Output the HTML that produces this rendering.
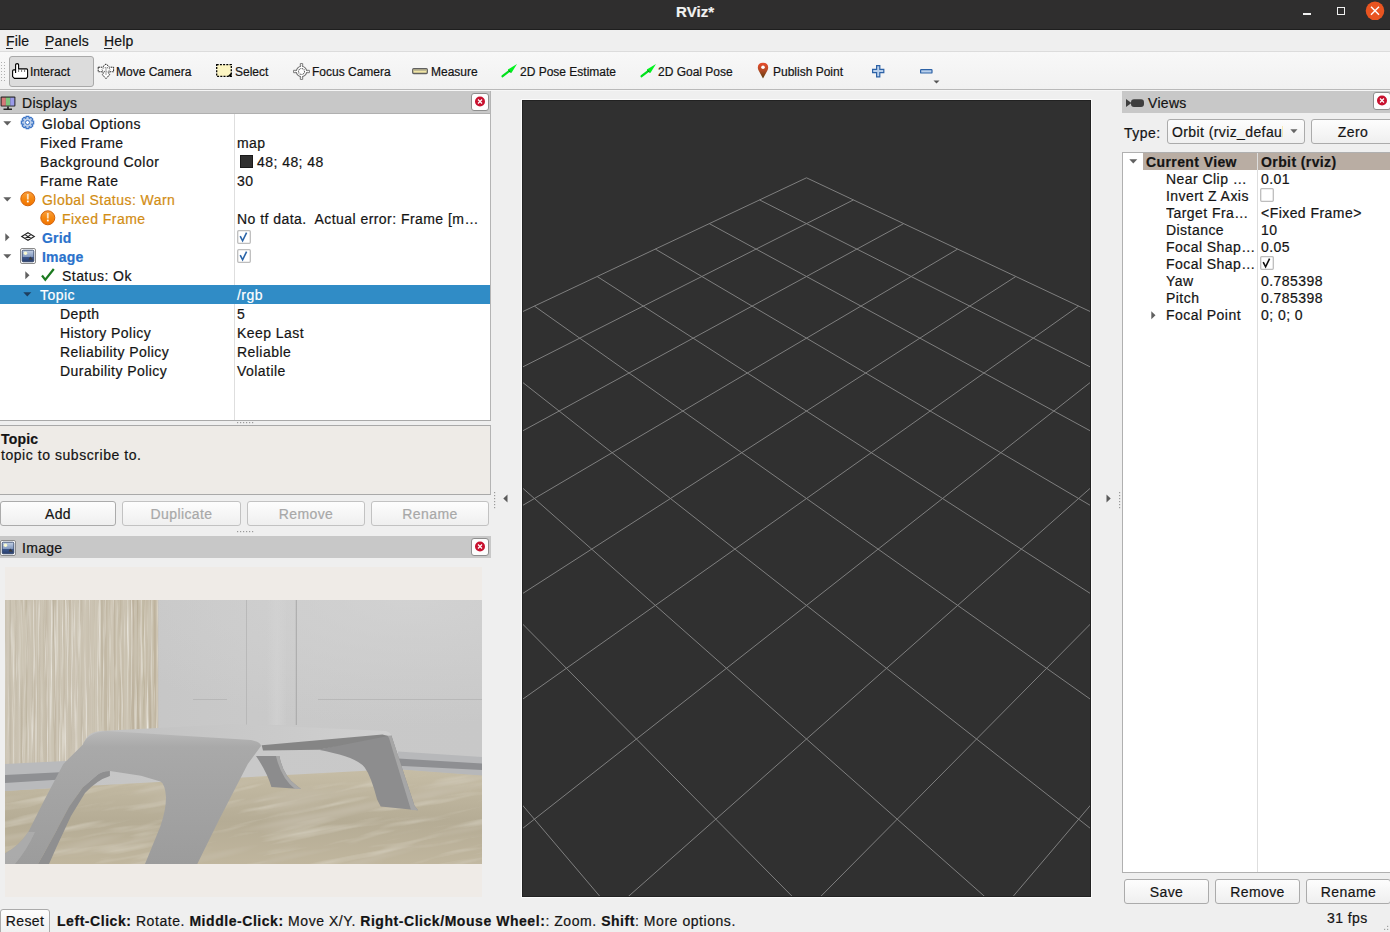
<!DOCTYPE html>
<html><head><meta charset="utf-8"><title>RViz</title>
<style>
*{margin:0;padding:0;box-sizing:border-box}
html,body{width:1390px;height:932px;overflow:hidden;background:#efefef;font-family:"Liberation Sans",sans-serif;font-size:14px;color:#141414;position:relative}
.a{position:absolute;white-space:nowrap;-webkit-text-stroke:0.2px currentColor}
svg.a{overflow:visible}
</style></head><body>
<div class="a" style="left:0px;top:0px;width:1390px;height:29px;background:#2f2e2e"></div>
<div class="a" style="left:0px;top:29px;width:1390px;height:1px;background:#1e1e1e"></div>
<div class="a" style="left:676px;top:1.80px;font-size:15px;line-height:20px;font-weight:700;color:#f2f2f2;letter-spacing:0.1px;">RViz*</div>
<div class="a" style="left:1303px;top:13px;width:8px;height:2px;background:#f0f0f0"></div>
<div class="a" style="left:1337px;top:7px;width:8px;height:8px;border:1.5px solid #f0f0f0"></div>
<svg class="a" style="left:1364px;top:0px" width="24" height="24"><circle cx="11" cy="10.8" r="9.3" fill="#e95420"/><path d="M7 6.8L15 14.8M15 6.8L7 14.8" stroke="#fff" stroke-width="1.4"/></svg>
<div class="a" style="left:0px;top:30px;width:1390px;height:21px;background:#efefef"></div>
<div class="a" style="left:0px;top:51px;width:1390px;height:1px;background:#dcdcdc"></div>
<div class="a" style="left:6px;top:31.15px;font-size:14px;line-height:20px;letter-spacing:0.2px;">File</div>
<div class="a" style="left:45px;top:31.15px;font-size:14px;line-height:20px;letter-spacing:0.2px;">Panels</div>
<div class="a" style="left:104px;top:31.15px;font-size:14px;line-height:20px;letter-spacing:0.2px;">Help</div>
<div class="a" style="left:6px;top:48px;width:7px;height:1px;background:#222"></div>
<div class="a" style="left:45px;top:48px;width:8px;height:1px;background:#222"></div>
<div class="a" style="left:104px;top:48px;width:8px;height:1px;background:#222"></div>
<div class="a" style="left:0px;top:52px;width:1390px;height:37px;background:linear-gradient(#f8f8f8,#f1f1f1)"></div>
<div class="a" style="left:0px;top:89px;width:1390px;height:1px;background:#b9b9b9"></div>
<div class="a" style="left:0px;top:90px;width:1390px;height:1px;background:#f6f6f6"></div>
<svg class="a" style="left:0;top:60px" width="6" height="22"><rect x="1" y="2" width="1" height="1" fill="#b0b0b0"/><rect x="1" y="5" width="1" height="1" fill="#b0b0b0"/><rect x="1" y="8" width="1" height="1" fill="#b0b0b0"/><rect x="1" y="11" width="1" height="1" fill="#b0b0b0"/><rect x="1" y="14" width="1" height="1" fill="#b0b0b0"/><rect x="1" y="17" width="1" height="1" fill="#b0b0b0"/><rect x="1" y="20" width="1" height="1" fill="#b0b0b0"/><rect x="4" y="2" width="1" height="1" fill="#b0b0b0"/><rect x="4" y="5" width="1" height="1" fill="#b0b0b0"/><rect x="4" y="8" width="1" height="1" fill="#b0b0b0"/><rect x="4" y="11" width="1" height="1" fill="#b0b0b0"/><rect x="4" y="14" width="1" height="1" fill="#b0b0b0"/><rect x="4" y="17" width="1" height="1" fill="#b0b0b0"/><rect x="4" y="20" width="1" height="1" fill="#b0b0b0"/></svg>
<div class="a" style="left:9px;top:56px;width:85px;height:31px;background:#dcdcdc;border:1px solid #a9a9a9;border-radius:3px"></div>
<div class="a" style="left:30px;top:61.84px;font-size:12px;line-height:20px;">Interact</div>
<div class="a" style="left:116px;top:61.84px;font-size:12px;line-height:20px;">Move Camera</div>
<div class="a" style="left:235px;top:61.84px;font-size:12px;line-height:20px;">Select</div>
<div class="a" style="left:312px;top:61.84px;font-size:12px;line-height:20px;">Focus Camera</div>
<div class="a" style="left:431px;top:61.84px;font-size:12px;line-height:20px;">Measure</div>
<div class="a" style="left:520px;top:61.84px;font-size:12px;line-height:20px;">2D Pose Estimate</div>
<div class="a" style="left:658px;top:61.84px;font-size:12px;line-height:20px;">2D Goal Pose</div>
<div class="a" style="left:773px;top:61.84px;font-size:12px;line-height:20px;">Publish Point</div>
<svg class="a" style="left:12px;top:63px;" width="17" height="17" viewBox="0 0 17 17"><path d="M3.6 10 V1.9 Q3.6 0.6 5.1 0.6 Q6.6 0.6 6.6 1.9 V5.9 H14.6 Q15.6 5.9 15.6 6.9 V13.8 L14.3 15.4 H2.4 L0.6 13.6 V8 Q0.6 6.9 1.7 6.9 H3.6" fill="#fff" stroke="#000" stroke-width="1.1"/><path d="M6.6 6 V9 M9.6 6 V9 M12.6 6 V9" stroke="#666" stroke-width="0.9"/></svg>
<svg class="a" style="left:97px;top:63px;" width="18" height="17" viewBox="0 0 18 17"><path d="M1.2 4.2 L5.4 4.2 L9 0.9 L12.6 4.2 L16.6 4.2 L16.6 8.8 Q12.5 8.4 11.2 9.6 L12.6 11.8 L9 15.6 L5.4 11.8 L6.8 9.6 Q5.5 8.4 1.2 8.8 Z" fill="#fff" stroke="#222" stroke-width="1" stroke-dasharray="1.8 0.7"/><ellipse cx="9" cy="6.6" rx="4" ry="2" fill="none" stroke="#333" stroke-width="0.9" stroke-dasharray="1 0.9"/><path d="M9 4.5 V12" stroke="#b8b8b8" stroke-width="1.4"/></svg>
<svg class="a" style="left:216px;top:64px;" width="16" height="13" viewBox="0 0 16 13"><rect x="0.7" y="0.7" width="14.6" height="11.6" fill="#fcf5c2" stroke="#000" stroke-width="1.3" stroke-dasharray="2 1.2"/><path d="M15.5 8.5 V12.6 H11.4 Z" fill="#000"/></svg>
<svg class="a" style="left:293px;top:63px;" width="17" height="17" viewBox="0 0 17 17"><circle cx="8.5" cy="8.5" r="5.2" fill="#fff" stroke="#777" stroke-width="1.1"/><path d="M7.3 0.6 H9.7 V3.3 H7.3Z M7.3 13.7 H9.7 V16.4 H7.3Z M0.6 7.3 V9.7 H3.3 V7.3Z M13.7 7.3 V9.7 H16.4 V7.3Z" fill="#fff" stroke="#777" stroke-width="1"/><path d="M8.5 3 V14 M3 8.5 H14" stroke="#fff" stroke-width="1"/><circle cx="8.5" cy="8.5" r="3" fill="none" stroke="#555" stroke-width="1.1" stroke-dasharray="1 0.8"/></svg>
<svg class="a" style="left:412px;top:68px;" width="16" height="6" viewBox="0 0 16 6"><rect x="0.7" y="0.7" width="14.6" height="4.8" rx="1" fill="#f1e6a6" stroke="#606060" stroke-width="1.3"/><path d="M3 1 V3 M5 1 V3 M7 1 V3 M9 1 V3 M11 1 V3 M13 1 V3" stroke="#777" stroke-width="0.8"/></svg>
<svg class="a" style="left:501px;top:63px;" width="17" height="15" viewBox="0 0 17 15"><path d="M1.6 13.2 L8.5 7.8" stroke="#00e21c" stroke-width="2.3" stroke-linecap="round"/><path d="M6.8 6.6 L16 1 L10.4 9.9 Z" fill="#00f41e"/><path d="M7.4 7.2 L9.7 9.4" stroke="#0a6a12" stroke-width="1"/></svg>
<svg class="a" style="left:640px;top:63px;" width="17" height="15" viewBox="0 0 17 15"><path d="M1.6 13.2 L8.5 7.8" stroke="#00e21c" stroke-width="2.3" stroke-linecap="round"/><path d="M6.8 6.6 L16 1 L10.4 9.9 Z" fill="#00f41e"/><path d="M7.4 7.2 L9.7 9.4" stroke="#0a6a12" stroke-width="1"/></svg>
<svg class="a" style="left:757px;top:62px;" width="12" height="17" viewBox="0 0 12 17"><defs><linearGradient id="pg" x1="0" y1="0" x2="0" y2="1"><stop offset="0" stop-color="#ea4c2c"/><stop offset="0.5" stop-color="#b14a25"/><stop offset="1" stop-color="#5a3a0a"/></linearGradient></defs><path d="M6 16.5 L1.6 8.6 Q0.8 7.2 0.8 5.6 Q0.8 0.7 6 0.7 Q11.2 0.7 11.2 5.6 Q11.2 7.2 10.4 8.6 Z" fill="url(#pg)"/><circle cx="6" cy="5.2" r="1.8" fill="#fff"/></svg>
<svg class="a" style="left:872px;top:65px;" width="13" height="13" viewBox="0 0 13 13"><path d="M4.6 0.6 H7.8 V4.4 H11.8 V7.6 H7.8 V11.8 H4.6 V7.6 H0.6 V4.4 H4.6 Z" fill="#b9d0ec" stroke="#2d62a6" stroke-width="1.2"/></svg>
<svg class="a" style="left:920px;top:69px;" width="13" height="5" viewBox="0 0 13 5"><rect x="0.6" y="0.6" width="11.4" height="3.4" rx="0.6" fill="#b9d0ec" stroke="#2d62a6" stroke-width="1.2"/></svg>
<svg class="a" style="left:933px;top:80px;" width="8" height="4" viewBox="0 0 8 4"><path d="M0.5 0.5 H6.5 L3.5 3.5 Z" fill="#555"/></svg>
<div class="a" style="left:0px;top:91px;width:491px;height:22px;background:#c8c8c8"></div>
<div class="a" style="left:0px;top:113px;width:491px;height:1px;background:#b0b0b0"></div>
<svg class="a" style="left:0px;top:96px;" width="16" height="15" viewBox="0 0 16 15"><rect x="0.6" y="0.6" width="14.8" height="10" rx="1" fill="#222"/><rect x="1.6" y="1.6" width="4.3" height="8" fill="#d47a7a"/><rect x="5.9" y="1.6" width="4.3" height="8" fill="#7cc57c"/><rect x="10.2" y="1.6" width="4.2" height="8" fill="#9a9ae8"/><path d="M8 10.6 V12.5 M3.5 13.3 H12" stroke="#222" stroke-width="1.6"/></svg>
<div class="a" style="left:22px;top:93.15px;font-size:14px;line-height:20px;letter-spacing:0.3px;">Displays</div>
<svg class="a" style="left:471px;top:93px;" width="18" height="18" viewBox="0 0 18 18"><rect x="0.5" y="0.5" width="17" height="17" rx="2.5" fill="#fdfdfd" stroke="#8e8e8e"/><circle cx="9" cy="8.5" r="5" fill="#c8102e"/><path d="M7 6.5 L11 10.5 M11 6.5 L7 10.5" stroke="#fff" stroke-width="1.2"/></svg>
<div class="a" style="left:0px;top:114px;width:490px;height:306px;background:#fff"></div>
<div class="a" style="left:490px;top:91px;width:1px;height:330px;background:#b4b4b4"></div>
<div class="a" style="left:0px;top:420px;width:491px;height:1px;background:#a9a9a9"></div>
<div class="a" style="left:234px;top:114px;width:1px;height:306px;background:#dedede"></div>
<div class="a" style="left:0px;top:285px;width:490px;height:19px;background:#308cc6"></div>
<div class="a" style="left:42px;top:113.75px;font-size:14px;line-height:20px;letter-spacing:0.45px;">Global Options</div>
<div class="a" style="left:40px;top:132.75px;font-size:14px;line-height:20px;letter-spacing:0.45px;">Fixed Frame</div>
<div class="a" style="left:40px;top:151.75px;font-size:14px;line-height:20px;letter-spacing:0.45px;">Background Color</div>
<div class="a" style="left:40px;top:170.75px;font-size:14px;line-height:20px;letter-spacing:0.45px;">Frame Rate</div>
<div class="a" style="left:42px;top:189.75px;font-size:14px;line-height:20px;color:#d28d14;letter-spacing:0.45px;">Global Status: Warn</div>
<div class="a" style="left:62px;top:208.75px;font-size:14px;line-height:20px;color:#d28d14;letter-spacing:0.45px;">Fixed Frame</div>
<div class="a" style="left:42px;top:227.75px;font-size:14px;line-height:20px;font-weight:700;color:#2a72cc;letter-spacing:0.2px;">Grid</div>
<div class="a" style="left:42px;top:246.75px;font-size:14px;line-height:20px;font-weight:700;color:#2a72cc;letter-spacing:0.2px;">Image</div>
<div class="a" style="left:62px;top:265.75px;font-size:14px;line-height:20px;letter-spacing:0.45px;">Status: Ok</div>
<div class="a" style="left:40px;top:284.75px;font-size:14px;line-height:20px;color:#ffffff;letter-spacing:0.45px;">Topic</div>
<div class="a" style="left:60px;top:303.75px;font-size:14px;line-height:20px;letter-spacing:0.45px;">Depth</div>
<div class="a" style="left:60px;top:322.75px;font-size:14px;line-height:20px;letter-spacing:0.45px;">History Policy</div>
<div class="a" style="left:60px;top:341.75px;font-size:14px;line-height:20px;letter-spacing:0.45px;">Reliability Policy</div>
<div class="a" style="left:60px;top:360.75px;font-size:14px;line-height:20px;letter-spacing:0.45px;">Durability Policy</div>
<div class="a" style="left:237px;top:132.75px;font-size:14px;line-height:20px;letter-spacing:0.45px;">map</div>
<div class="a" style="left:237px;top:170.75px;font-size:14px;line-height:20px;letter-spacing:0.45px;">30</div>
<div class="a" style="left:237px;top:208.75px;font-size:14px;line-height:20px;letter-spacing:0.45px;">No tf data.&nbsp; Actual error: Frame [m…</div>
<div class="a" style="left:237px;top:284.75px;font-size:14px;line-height:20px;color:#fff;letter-spacing:0.45px;">/rgb</div>
<div class="a" style="left:237px;top:303.75px;font-size:14px;line-height:20px;letter-spacing:0.45px;">5</div>
<div class="a" style="left:237px;top:322.75px;font-size:14px;line-height:20px;letter-spacing:0.45px;">Keep Last</div>
<div class="a" style="left:237px;top:341.75px;font-size:14px;line-height:20px;letter-spacing:0.45px;">Reliable</div>
<div class="a" style="left:237px;top:360.75px;font-size:14px;line-height:20px;letter-spacing:0.45px;">Volatile</div>
<div class="a" style="left:257px;top:151.75px;font-size:14px;line-height:20px;letter-spacing:0.45px;">48; 48; 48</div>
<div class="a" style="left:240px;top:155px;width:13px;height:13px;background:#303030;border:1px solid #1a1a1a"></div>
<svg class="a" style="left:3px;top:121px;" width="9" height="5" viewBox="0 0 9 5"><path d="M0.3 0.3 H8.3 L4.3 4.5 Z" fill="#606060"/></svg>
<svg class="a" style="left:3px;top:197px;" width="9" height="5" viewBox="0 0 9 5"><path d="M0.3 0.3 H8.3 L4.3 4.5 Z" fill="#606060"/></svg>
<svg class="a" style="left:5px;top:233px;" width="5" height="9" viewBox="0 0 5 9"><path d="M0.3 0.3 V8.3 L4.5 4.3 Z" fill="#606060"/></svg>
<svg class="a" style="left:3px;top:254px;" width="9" height="5" viewBox="0 0 9 5"><path d="M0.3 0.3 H8.3 L4.3 4.5 Z" fill="#606060"/></svg>
<svg class="a" style="left:25px;top:271px;" width="5" height="9" viewBox="0 0 5 9"><path d="M0.3 0.3 V8.3 L4.5 4.3 Z" fill="#606060"/></svg>
<svg class="a" style="left:23px;top:292px;" width="9" height="5" viewBox="0 0 9 5"><path d="M0.3 0.3 H8.3 L4.3 4.5 Z" fill="#1e3f5e"/></svg>
<svg class="a" style="left:21px;top:116px;" width="13" height="13" viewBox="0 0 13 13"><path d="M12.65 5.13 L12.65 7.87 L10.90 8.16 L10.78 8.44 L11.82 9.88 L9.88 11.82 L8.44 10.78 L8.16 10.90 L7.87 12.65 L5.13 12.65 L4.84 10.90 L4.56 10.78 L3.12 11.82 L1.18 9.88 L2.22 8.44 L2.10 8.16 L0.35 7.87 L0.35 5.13 L2.10 4.84 L2.22 4.56 L1.18 3.12 L3.12 1.18 L4.56 2.22 L4.84 2.10 L5.13 0.35 L7.87 0.35 L8.16 2.10 L8.44 2.22 L9.88 1.18 L11.82 3.12 L10.78 4.56 L10.90 4.84Z" fill="#b8cdea" stroke="#3b74c6" stroke-width="1.2"/><circle cx="6.5" cy="6.5" r="2" fill="#fff" stroke="#3b74c6" stroke-width="1"/></svg>
<svg class="a" style="left:20px;top:191px;" width="16" height="16" viewBox="0 0 16 16"><defs><linearGradient id="wg" x1="0" y1="0" x2="0" y2="1"><stop offset="0" stop-color="#f9a040"/><stop offset="0.5" stop-color="#f5870f"/><stop offset="1" stop-color="#f27300"/></linearGradient></defs><circle cx="7.8" cy="7.8" r="7" fill="url(#wg)" stroke="#d2620a" stroke-width="1"/><rect x="6.9" y="3" width="1.8" height="5.5" fill="#fde3c0"/><rect x="6.9" y="9.6" width="1.8" height="1.8" fill="#fff"/></svg>
<svg class="a" style="left:40px;top:210px;" width="16" height="16" viewBox="0 0 16 16"><defs><linearGradient id="wg" x1="0" y1="0" x2="0" y2="1"><stop offset="0" stop-color="#f9a040"/><stop offset="0.5" stop-color="#f5870f"/><stop offset="1" stop-color="#f27300"/></linearGradient></defs><circle cx="7.8" cy="7.8" r="7" fill="url(#wg)" stroke="#d2620a" stroke-width="1"/><rect x="6.9" y="3" width="1.8" height="5.5" fill="#fde3c0"/><rect x="6.9" y="9.6" width="1.8" height="1.8" fill="#fff"/></svg>
<svg class="a" style="left:21px;top:232px;" width="14" height="10" viewBox="0 0 14 10"><path d="M7 0.7 L13.3 4.5 L7 8.3 L0.7 4.5 Z M3.9 2.6 L10.1 6.4 M10.1 2.6 L3.9 6.4" fill="none" stroke="#222" stroke-width="1.1"/></svg>
<svg class="a" style="left:20px;top:248px;" width="16" height="16" viewBox="0 0 16 16"><rect x="0.5" y="0.5" width="15" height="15" rx="1.5" fill="#fff" stroke="#8a8a8a"/><defs><linearGradient id="ig" x1="0" y1="0" x2="0" y2="1"><stop offset="0" stop-color="#c5d2e6"/><stop offset="0.6" stop-color="#7f96bd"/><stop offset="0.62" stop-color="#3a5488"/><stop offset="1" stop-color="#2a4070"/></linearGradient></defs><rect x="2.2" y="2.2" width="11.6" height="11.6" rx="1" fill="url(#ig)" stroke="#24385e" stroke-width="0.8"/><circle cx="5.5" cy="5.3" r="1.7" fill="#fbfbd0"/><path d="M8.5 11.5 L10.3 8.5 L13 11.8 Z" fill="#3a3a3a"/></svg>
<svg class="a" style="left:41px;top:268px;" width="14" height="13" viewBox="0 0 14 13"><path d="M1 7.5 L4.3 11.8 L12.8 1" fill="none" stroke="#1b7a1f" stroke-width="2.2"/></svg>
<svg class="a" style="left:237px;top:230px;" width="14" height="14" viewBox="0 0 14 14"><rect x="0.7" y="0.7" width="12.6" height="12.6" rx="1" fill="#fff" stroke="#bdbdbd" stroke-width="1.3"/><path d="M3.2 6.2 L5.6 10.8 L9.6 2.6" fill="none" stroke="#2a64a8" stroke-width="1.6"/></svg>
<svg class="a" style="left:237px;top:249px;" width="14" height="14" viewBox="0 0 14 14"><rect x="0.7" y="0.7" width="12.6" height="12.6" rx="1" fill="#fff" stroke="#bdbdbd" stroke-width="1.3"/><path d="M3.2 6.2 L5.6 10.8 L9.6 2.6" fill="none" stroke="#2a64a8" stroke-width="1.6"/></svg>
<svg class="a" style="left:237px;top:422px" width="18" height="2"><rect x="0" y="0" width="1.2" height="1.2" fill="#9a9a9a"/><rect x="3" y="0" width="1.2" height="1.2" fill="#9a9a9a"/><rect x="6" y="0" width="1.2" height="1.2" fill="#9a9a9a"/><rect x="9" y="0" width="1.2" height="1.2" fill="#9a9a9a"/><rect x="12" y="0" width="1.2" height="1.2" fill="#9a9a9a"/><rect x="15" y="0" width="1.2" height="1.2" fill="#9a9a9a"/></svg>
<svg class="a" style="left:237px;top:531px" width="18" height="2"><rect x="0" y="0" width="1.2" height="1.2" fill="#9a9a9a"/><rect x="3" y="0" width="1.2" height="1.2" fill="#9a9a9a"/><rect x="6" y="0" width="1.2" height="1.2" fill="#9a9a9a"/><rect x="9" y="0" width="1.2" height="1.2" fill="#9a9a9a"/><rect x="12" y="0" width="1.2" height="1.2" fill="#9a9a9a"/><rect x="15" y="0" width="1.2" height="1.2" fill="#9a9a9a"/></svg>
<svg class="a" style="left:494px;top:492px" width="2" height="18"><rect x="0" y="0" width="1.2" height="1.2" fill="#9a9a9a"/><rect x="0" y="3" width="1.2" height="1.2" fill="#9a9a9a"/><rect x="0" y="6" width="1.2" height="1.2" fill="#9a9a9a"/><rect x="0" y="9" width="1.2" height="1.2" fill="#9a9a9a"/><rect x="0" y="12" width="1.2" height="1.2" fill="#9a9a9a"/><rect x="0" y="15" width="1.2" height="1.2" fill="#9a9a9a"/></svg>
<svg class="a" style="left:1119px;top:492px" width="2" height="18"><rect x="0" y="0" width="1.2" height="1.2" fill="#9a9a9a"/><rect x="0" y="3" width="1.2" height="1.2" fill="#9a9a9a"/><rect x="0" y="6" width="1.2" height="1.2" fill="#9a9a9a"/><rect x="0" y="9" width="1.2" height="1.2" fill="#9a9a9a"/><rect x="0" y="12" width="1.2" height="1.2" fill="#9a9a9a"/><rect x="0" y="15" width="1.2" height="1.2" fill="#9a9a9a"/></svg>
<div class="a" style="left:0px;top:425px;width:491px;height:70px;background:#eeebe7;border-top:1px solid #a9a9a9;border-bottom:1px solid #a9a9a9;border-right:1px solid #b4b4b4"></div>
<div class="a" style="left:1px;top:428.55px;font-size:14px;line-height:20px;font-weight:700;letter-spacing:0.2px;">Topic</div>
<div class="a" style="left:1px;top:444.65px;font-size:14px;line-height:20px;letter-spacing:0.55px;">topic to subscribe to.</div>
<div class="a" style="left:0px;top:501px;width:116px;height:25px;background:linear-gradient(#fdfdfd,#efefef);border:1px solid #ababab;border-radius:3px"></div>
<div class="a" style="left:0px;top:503.65px;width:116px;text-align:center;font-size:14px;line-height:20px;letter-spacing:0.4px;">Add</div>
<div class="a" style="left:122px;top:501px;width:119px;height:25px;background:linear-gradient(#fdfdfd,#efefef);border:1px solid #c2c2c2;border-radius:3px"></div>
<div class="a" style="left:122px;top:503.65px;width:119px;text-align:center;font-size:14px;line-height:20px;letter-spacing:0.4px;color:#a8a8a8;">Duplicate</div>
<div class="a" style="left:247px;top:501px;width:118px;height:25px;background:linear-gradient(#fdfdfd,#efefef);border:1px solid #c2c2c2;border-radius:3px"></div>
<div class="a" style="left:247px;top:503.65px;width:118px;text-align:center;font-size:14px;line-height:20px;letter-spacing:0.4px;color:#a8a8a8;">Remove</div>
<div class="a" style="left:371px;top:501px;width:118px;height:25px;background:linear-gradient(#fdfdfd,#efefef);border:1px solid #c2c2c2;border-radius:3px"></div>
<div class="a" style="left:371px;top:503.65px;width:118px;text-align:center;font-size:14px;line-height:20px;letter-spacing:0.4px;color:#a8a8a8;">Rename</div>
<div class="a" style="left:0px;top:536px;width:491px;height:22px;background:#c8c8c8"></div>
<svg class="a" style="left:0px;top:540px;" width="16" height="16" viewBox="0 0 16 16"><rect x="0.5" y="0.5" width="15" height="15" rx="1.5" fill="#fff" stroke="#8a8a8a"/><defs><linearGradient id="ig" x1="0" y1="0" x2="0" y2="1"><stop offset="0" stop-color="#c5d2e6"/><stop offset="0.6" stop-color="#7f96bd"/><stop offset="0.62" stop-color="#3a5488"/><stop offset="1" stop-color="#2a4070"/></linearGradient></defs><rect x="2.2" y="2.2" width="11.6" height="11.6" rx="1" fill="url(#ig)" stroke="#24385e" stroke-width="0.8"/><circle cx="5.5" cy="5.3" r="1.7" fill="#fbfbd0"/><path d="M8.5 11.5 L10.3 8.5 L13 11.8 Z" fill="#3a3a3a"/></svg>
<div class="a" style="left:22px;top:538.15px;font-size:14px;line-height:20px;letter-spacing:0.3px;">Image</div>
<svg class="a" style="left:471px;top:538px;" width="18" height="18" viewBox="0 0 18 18"><rect x="0.5" y="0.5" width="17" height="17" rx="2.5" fill="#fdfdfd" stroke="#8e8e8e"/><circle cx="9" cy="8.5" r="5" fill="#c8102e"/><path d="M7 6.5 L11 10.5 M11 6.5 L7 10.5" stroke="#fff" stroke-width="1.2"/></svg>
<div class="a" style="left:5px;top:567px;width:477px;height:330px;background:#efebe7"></div>
<svg class="a" style="left:5px;top:600px;overflow:hidden" width="477" height="264" viewBox="0 0 477 264"><defs>
<filter id="bl" x="-10%" y="-10%" width="120%" height="120%"><feGaussianBlur stdDeviation="0.9"/></filter><filter id="bl2" x="-5%" y="0" width="110%" height="100%"><feGaussianBlur stdDeviation="0.7 0"/></filter>
<clipPath id="flc"><path d="M0 191 L80 186 L393 169 L477 175 V264 H0 Z"/></clipPath>
<linearGradient id="wall" x1="0" y1="0" x2="1" y2="0"><stop offset="0" stop-color="#c3c3c3"/><stop offset="0.5" stop-color="#c9c9c9"/><stop offset="1" stop-color="#c8c8c8"/></linearGradient>
<linearGradient id="floor" x1="0" y1="0" x2="0" y2="1"><stop offset="0" stop-color="#c6bda6"/><stop offset="0.55" stop-color="#b5ac95"/><stop offset="1" stop-color="#c0b69e"/></linearGradient>
<linearGradient id="wood" x1="0" y1="0" x2="1" y2="0"><stop offset="0" stop-color="#c8c0b0"/><stop offset="0.5" stop-color="#cbc3b3"/><stop offset="1" stop-color="#c2b8a3"/></linearGradient>
<linearGradient id="panel" x1="0" y1="0" x2="0" y2="1"><stop offset="0" stop-color="#b9b9b9"/><stop offset="0.12" stop-color="#a9a9a9"/><stop offset="1" stop-color="#9c9c9c"/></linearGradient>
<linearGradient id="top" x1="0" y1="0" x2="1" y2="0"><stop offset="0" stop-color="#c0c0c0"/><stop offset="1" stop-color="#d0d0d0"/></linearGradient>
</defs>
<rect width="477" height="264" fill="url(#wall)"/><radialGradient id="wl" cx="0.85" cy="0" r="0.7"><stop offset="0" stop-color="#d4d4d4" stop-opacity="0.8"/><stop offset="1" stop-color="#d4d4d4" stop-opacity="0"/></radialGradient><rect width="477" height="180" fill="url(#wl)"/>
<rect x="0" y="0" width="153" height="168" fill="url(#wood)"/>
<g filter="url(#bl2)" opacity="0.5"><rect x="36.4" y="0" width="1.3" height="168" fill="#bdb39f" opacity="0.76"/><rect x="72.5" y="0" width="1.3" height="168" fill="#a89c84" opacity="0.31"/><rect x="128.1" y="0" width="0.8" height="168" fill="#dcd6cb" opacity="0.40"/><rect x="109.7" y="0" width="1.3" height="168" fill="#a89c84" opacity="0.54"/><rect x="97.8" y="0" width="0.6" height="168" fill="#d6cfc0" opacity="0.38"/><rect x="141.7" y="0" width="1.0" height="168" fill="#b5aa93" opacity="0.64"/><rect x="9.8" y="0" width="1.6" height="168" fill="#a89c84" opacity="0.32"/><rect x="119.4" y="0" width="1.7" height="168" fill="#bdb39f" opacity="0.54"/><rect x="110.0" y="0" width="1.8" height="168" fill="#d6cfc0" opacity="0.69"/><rect x="65.3" y="0" width="1.6" height="168" fill="#a89c84" opacity="0.52"/><rect x="143.1" y="0" width="1.8" height="168" fill="#b5aa93" opacity="0.32"/><rect x="75.7" y="0" width="0.8" height="168" fill="#d6cfc0" opacity="0.52"/><rect x="95.9" y="0" width="0.9" height="168" fill="#a89c84" opacity="0.72"/><rect x="87.8" y="0" width="1.3" height="168" fill="#e0dbd0" opacity="0.59"/><rect x="138.3" y="0" width="1.5" height="168" fill="#b5aa93" opacity="0.73"/><rect x="151.6" y="0" width="1.5" height="168" fill="#dcd6cb" opacity="0.65"/><rect x="49.9" y="0" width="1.3" height="168" fill="#a89c84" opacity="0.58"/><rect x="109.2" y="0" width="0.7" height="168" fill="#a89c84" opacity="0.43"/><rect x="19.0" y="0" width="1.2" height="168" fill="#d6cfc0" opacity="0.79"/><rect x="13.5" y="0" width="1.7" height="168" fill="#e0dbd0" opacity="0.75"/><rect x="3.1" y="0" width="1.1" height="168" fill="#e0dbd0" opacity="0.74"/><rect x="6.8" y="0" width="1.4" height="168" fill="#b5aa93" opacity="0.49"/><rect x="89.7" y="0" width="1.3" height="168" fill="#bdb39f" opacity="0.55"/><rect x="152.8" y="0" width="0.9" height="168" fill="#b5aa93" opacity="0.35"/><rect x="81.9" y="0" width="1.9" height="168" fill="#e0dbd0" opacity="0.45"/><rect x="40.3" y="0" width="1.5" height="168" fill="#bdb39f" opacity="0.46"/><rect x="146.7" y="0" width="1.8" height="168" fill="#e0dbd0" opacity="0.49"/><rect x="133.1" y="0" width="1.0" height="168" fill="#a89c84" opacity="0.64"/><rect x="15.7" y="0" width="2.0" height="168" fill="#a89c84" opacity="0.44"/><rect x="97.0" y="0" width="1.5" height="168" fill="#bdb39f" opacity="0.52"/><rect x="39.5" y="0" width="0.9" height="168" fill="#bdb39f" opacity="0.31"/><rect x="63.5" y="0" width="1.3" height="168" fill="#b5aa93" opacity="0.49"/><rect x="90.1" y="0" width="0.6" height="168" fill="#d6cfc0" opacity="0.61"/><rect x="71.3" y="0" width="1.5" height="168" fill="#bdb39f" opacity="0.60"/><rect x="42.7" y="0" width="1.2" height="168" fill="#a89c84" opacity="0.33"/><rect x="103.4" y="0" width="1.9" height="168" fill="#bdb39f" opacity="0.61"/><rect x="45.7" y="0" width="1.4" height="168" fill="#dcd6cb" opacity="0.48"/><rect x="47.8" y="0" width="1.0" height="168" fill="#a89c84" opacity="0.43"/><rect x="120.5" y="0" width="0.6" height="168" fill="#b5aa93" opacity="0.79"/><rect x="104.6" y="0" width="0.6" height="168" fill="#a89c84" opacity="0.41"/><rect x="123.0" y="0" width="0.8" height="168" fill="#dcd6cb" opacity="0.64"/><rect x="99.4" y="0" width="0.6" height="168" fill="#a89c84" opacity="0.46"/><rect x="51.1" y="0" width="1.7" height="168" fill="#e0dbd0" opacity="0.70"/><rect x="147.0" y="0" width="0.5" height="168" fill="#d6cfc0" opacity="0.63"/><rect x="135.4" y="0" width="1.1" height="168" fill="#dcd6cb" opacity="0.69"/><rect x="5.2" y="0" width="1.9" height="168" fill="#bdb39f" opacity="0.70"/><rect x="128.3" y="0" width="0.7" height="168" fill="#bdb39f" opacity="0.47"/><rect x="126.7" y="0" width="0.5" height="168" fill="#a89c84" opacity="0.47"/><rect x="19.8" y="0" width="0.9" height="168" fill="#bdb39f" opacity="0.53"/><rect x="97.0" y="0" width="0.9" height="168" fill="#a89c84" opacity="0.50"/><rect x="140.9" y="0" width="0.6" height="168" fill="#b5aa93" opacity="0.54"/><rect x="127.4" y="0" width="1.4" height="168" fill="#a89c84" opacity="0.52"/><rect x="145.4" y="0" width="1.9" height="168" fill="#dcd6cb" opacity="0.32"/><rect x="69.9" y="0" width="1.6" height="168" fill="#d6cfc0" opacity="0.56"/><rect x="44.2" y="0" width="0.9" height="168" fill="#dcd6cb" opacity="0.73"/><rect x="131.3" y="0" width="2.0" height="168" fill="#b5aa93" opacity="0.71"/><rect x="6.9" y="0" width="1.8" height="168" fill="#d6cfc0" opacity="0.56"/><rect x="30.4" y="0" width="1.8" height="168" fill="#e0dbd0" opacity="0.59"/><rect x="2.0" y="0" width="1.6" height="168" fill="#dcd6cb" opacity="0.55"/><rect x="36.6" y="0" width="0.4" height="168" fill="#a89c84" opacity="0.51"/><rect x="143.7" y="0" width="1.4" height="168" fill="#bdb39f" opacity="0.36"/><rect x="148.7" y="0" width="1.3" height="168" fill="#b5aa93" opacity="0.48"/><rect x="30.2" y="0" width="1.3" height="168" fill="#b5aa93" opacity="0.39"/><rect x="121.1" y="0" width="1.9" height="168" fill="#dcd6cb" opacity="0.71"/><rect x="1.1" y="0" width="1.4" height="168" fill="#e0dbd0" opacity="0.32"/><rect x="41.5" y="0" width="0.8" height="168" fill="#a89c84" opacity="0.56"/><rect x="7.8" y="0" width="0.9" height="168" fill="#b5aa93" opacity="0.73"/><rect x="118.6" y="0" width="0.5" height="168" fill="#b5aa93" opacity="0.33"/><rect x="149.1" y="0" width="1.8" height="168" fill="#b5aa93" opacity="0.56"/><rect x="75.0" y="0" width="0.7" height="168" fill="#b5aa93" opacity="0.48"/><rect x="99.0" y="0" width="1.3" height="168" fill="#bdb39f" opacity="0.43"/><rect x="151.2" y="0" width="1.1" height="168" fill="#dcd6cb" opacity="0.58"/><rect x="109.6" y="0" width="1.0" height="168" fill="#b5aa93" opacity="0.58"/><rect x="6.6" y="0" width="1.1" height="168" fill="#d6cfc0" opacity="0.69"/><rect x="58.2" y="0" width="1.7" height="168" fill="#a89c84" opacity="0.74"/><rect x="8.1" y="0" width="1.4" height="168" fill="#d6cfc0" opacity="0.46"/><rect x="145.4" y="0" width="1.1" height="168" fill="#b5aa93" opacity="0.42"/><rect x="82.0" y="0" width="1.5" height="168" fill="#b5aa93" opacity="0.70"/><rect x="34.3" y="0" width="0.6" height="168" fill="#b5aa93" opacity="0.77"/><rect x="57.3" y="0" width="1.8" height="168" fill="#bdb39f" opacity="0.36"/><rect x="105.7" y="0" width="1.9" height="168" fill="#d6cfc0" opacity="0.63"/><rect x="135.8" y="0" width="1.7" height="168" fill="#d6cfc0" opacity="0.35"/><rect x="48.7" y="0" width="1.3" height="168" fill="#a89c84" opacity="0.66"/><rect x="72.5" y="0" width="0.8" height="168" fill="#e0dbd0" opacity="0.32"/><rect x="14.0" y="0" width="0.6" height="168" fill="#e0dbd0" opacity="0.39"/><rect x="3.6" y="0" width="1.7" height="168" fill="#b5aa93" opacity="0.31"/><rect x="17.6" y="0" width="1.2" height="168" fill="#d6cfc0" opacity="0.78"/><rect x="88.6" y="0" width="1.7" height="168" fill="#b5aa93" opacity="0.80"/><rect x="86.2" y="0" width="1.2" height="168" fill="#dcd6cb" opacity="0.35"/><rect x="114.6" y="0" width="1.9" height="168" fill="#b5aa93" opacity="0.58"/><rect x="133.0" y="0" width="0.7" height="168" fill="#b5aa93" opacity="0.42"/><rect x="27.5" y="0" width="0.8" height="168" fill="#a89c84" opacity="0.65"/><rect x="144.2" y="0" width="0.8" height="168" fill="#a89c84" opacity="0.50"/><rect x="53.6" y="0" width="1.1" height="168" fill="#b5aa93" opacity="0.49"/><rect x="36.0" y="0" width="1.9" height="168" fill="#d6cfc0" opacity="0.78"/><rect x="63.5" y="0" width="1.3" height="168" fill="#a89c84" opacity="0.64"/><rect x="79.1" y="0" width="1.2" height="168" fill="#d6cfc0" opacity="0.50"/><rect x="135.8" y="0" width="0.7" height="168" fill="#e0dbd0" opacity="0.67"/><rect x="140.2" y="0" width="1.2" height="168" fill="#e0dbd0" opacity="0.59"/><rect x="131.3" y="0" width="0.6" height="168" fill="#dcd6cb" opacity="0.37"/><rect x="78.9" y="0" width="1.9" height="168" fill="#d6cfc0" opacity="0.57"/><rect x="119.3" y="0" width="1.5" height="168" fill="#e0dbd0" opacity="0.60"/><rect x="89.4" y="0" width="2.0" height="168" fill="#dcd6cb" opacity="0.45"/><rect x="41.0" y="0" width="1.7" height="168" fill="#dcd6cb" opacity="0.39"/><rect x="55.2" y="0" width="0.9" height="168" fill="#dcd6cb" opacity="0.51"/><rect x="106.7" y="0" width="1.5" height="168" fill="#dcd6cb" opacity="0.53"/><rect x="127.7" y="0" width="1.7" height="168" fill="#a89c84" opacity="0.31"/><rect x="151.9" y="0" width="0.5" height="168" fill="#e0dbd0" opacity="0.69"/><rect x="134.9" y="0" width="0.5" height="168" fill="#dcd6cb" opacity="0.75"/><rect x="99.2" y="0" width="1.6" height="168" fill="#b5aa93" opacity="0.78"/><rect x="130.6" y="0" width="0.8" height="168" fill="#dcd6cb" opacity="0.69"/><rect x="21.0" y="0" width="1.4" height="168" fill="#d6cfc0" opacity="0.73"/><rect x="137.7" y="0" width="0.8" height="168" fill="#b5aa93" opacity="0.46"/><rect x="64.8" y="0" width="1.6" height="168" fill="#b5aa93" opacity="0.36"/><rect x="40.4" y="0" width="1.9" height="168" fill="#b5aa93" opacity="0.48"/><rect x="88.8" y="0" width="1.5" height="168" fill="#b5aa93" opacity="0.31"/><rect x="50.7" y="0" width="1.0" height="168" fill="#b5aa93" opacity="0.41"/><rect x="89.5" y="0" width="1.9" height="168" fill="#e0dbd0" opacity="0.36"/><rect x="48.8" y="0" width="1.8" height="168" fill="#b5aa93" opacity="0.63"/><rect x="17.2" y="0" width="1.8" height="168" fill="#bdb39f" opacity="0.35"/><rect x="144.0" y="0" width="1.0" height="168" fill="#bdb39f" opacity="0.68"/><rect x="45.2" y="0" width="1.5" height="168" fill="#d6cfc0" opacity="0.77"/><rect x="125.1" y="0" width="0.6" height="168" fill="#bdb39f" opacity="0.64"/><rect x="82.0" y="0" width="0.6" height="168" fill="#e0dbd0" opacity="0.55"/><rect x="9.1" y="0" width="0.9" height="168" fill="#d6cfc0" opacity="0.58"/><rect x="27.8" y="0" width="1.4" height="168" fill="#d6cfc0" opacity="0.37"/><rect x="56.7" y="0" width="1.9" height="168" fill="#e0dbd0" opacity="0.36"/><rect x="142.6" y="0" width="0.6" height="168" fill="#bdb39f" opacity="0.62"/><rect x="99.4" y="0" width="1.1" height="168" fill="#bdb39f" opacity="0.62"/><rect x="70.0" y="0" width="0.9" height="168" fill="#dcd6cb" opacity="0.65"/><rect x="16.4" y="0" width="0.7" height="168" fill="#a89c84" opacity="0.57"/><rect x="113.2" y="0" width="1.0" height="168" fill="#bdb39f" opacity="0.44"/><rect x="8.2" y="0" width="0.6" height="168" fill="#e0dbd0" opacity="0.55"/><rect x="37.8" y="0" width="1.6" height="168" fill="#bdb39f" opacity="0.74"/><rect x="144.6" y="0" width="1.1" height="168" fill="#b5aa93" opacity="0.48"/><rect x="129.6" y="0" width="0.6" height="168" fill="#bdb39f" opacity="0.60"/><rect x="104.3" y="0" width="1.3" height="168" fill="#d6cfc0" opacity="0.36"/><rect x="106.8" y="0" width="1.3" height="168" fill="#d6cfc0" opacity="0.67"/><rect x="124.8" y="0" width="1.6" height="168" fill="#a89c84" opacity="0.60"/><rect x="131.5" y="0" width="1.7" height="168" fill="#a89c84" opacity="0.56"/><rect x="87.0" y="0" width="0.7" height="168" fill="#bdb39f" opacity="0.48"/><rect x="44.8" y="0" width="1.7" height="168" fill="#e0dbd0" opacity="0.75"/><rect x="145.2" y="0" width="1.0" height="168" fill="#a89c84" opacity="0.75"/><rect x="47.4" y="0" width="1.2" height="168" fill="#a89c84" opacity="0.64"/><rect x="45.8" y="0" width="1.8" height="168" fill="#e0dbd0" opacity="0.32"/><rect x="29.1" y="0" width="1.4" height="168" fill="#b5aa93" opacity="0.69"/><rect x="101.3" y="0" width="1.2" height="168" fill="#a89c84" opacity="0.61"/><rect x="30.4" y="0" width="1.7" height="168" fill="#dcd6cb" opacity="0.32"/><rect x="76.6" y="0" width="1.4" height="168" fill="#e0dbd0" opacity="0.36"/><rect x="43.3" y="0" width="1.5" height="168" fill="#dcd6cb" opacity="0.37"/><rect x="121.2" y="0" width="1.4" height="168" fill="#b5aa93" opacity="0.31"/><rect x="94.6" y="0" width="1.2" height="168" fill="#e0dbd0" opacity="0.57"/><rect x="142.3" y="0" width="0.9" height="168" fill="#bdb39f" opacity="0.65"/><rect x="20.6" y="0" width="1.8" height="168" fill="#a89c84" opacity="0.69"/><rect x="5.2" y="0" width="0.5" height="168" fill="#bdb39f" opacity="0.80"/><rect x="31.4" y="0" width="0.5" height="168" fill="#dcd6cb" opacity="0.52"/><rect x="115.8" y="0" width="1.2" height="168" fill="#b5aa93" opacity="0.69"/><rect x="62.5" y="0" width="1.8" height="168" fill="#d6cfc0" opacity="0.38"/><rect x="76.1" y="0" width="1.5" height="168" fill="#a89c84" opacity="0.73"/><rect x="31.9" y="0" width="1.2" height="168" fill="#b5aa93" opacity="0.53"/></g><filter id="wt" x="0" y="0" width="100%" height="100%"><feTurbulence type="fractalNoise" baseFrequency="0.5 0.012" numOctaves="3" seed="7"/><feColorMatrix type="matrix" values="0 0 0 0 0.88  0 0 0 0 0.86  0 0 0 0 0.81  0 0 0 -2.4 1.2"/></filter><filter id="wt2" x="0" y="0" width="100%" height="100%"><feTurbulence type="fractalNoise" baseFrequency="0.3 0.01" numOctaves="3" seed="3"/><feColorMatrix type="matrix" values="0 0 0 0 0.60  0 0 0 0 0.55  0 0 0 0 0.45  0 0 0 3.0 -1.35"/></filter><rect x="0" y="0" width="153" height="168" filter="url(#wt)"/><rect x="0" y="0" width="153" height="168" filter="url(#wt2)"/>
<linearGradient id="hl" x1="0" y1="0" x2="1" y2="0"><stop offset="0" stop-color="#d6d6d6" stop-opacity="0"/><stop offset="0.5" stop-color="#d4d4d4" stop-opacity="0.55"/><stop offset="1" stop-color="#d6d6d6" stop-opacity="0"/></linearGradient><rect x="262" y="0" width="20" height="125" fill="url(#hl)"/><path d="M241.5 0 V125" stroke="#b4b4b4" stroke-width="0.8"/><path d="M291.3 0 V125" stroke="#a4a4a4" stroke-width="0.9"/>
<path d="M313 99.5 H477 M188 99.5 H222" stroke="#b0b0b0" stroke-width="0.7"/>
<path d="M0 191 L80 186 L393 169 L477 175 V264 H0 Z" fill="url(#floor)"/>
<filter id="ft" x="0" y="0" width="100%" height="100%"><feTurbulence type="fractalNoise" baseFrequency="0.012 0.12" numOctaves="3" seed="11"/><feColorMatrix type="matrix" values="0 0 0 0 0.80  0 0 0 0 0.77  0 0 0 0 0.69  0 0 0 -1.3 0.6"/></filter><filter id="ft2" x="0" y="0" width="100%" height="100%"><feTurbulence type="fractalNoise" baseFrequency="0.008 0.08" numOctaves="2" seed="5"/><feColorMatrix type="matrix" values="0 0 0 0 0.58  0 0 0 0 0.53  0 0 0 0 0.43  0 0 0 2.0 -1.05"/></filter><g clip-path="url(#flc)"><g transform="rotate(-11 240 220)"><rect x="-100" y="100" width="700" height="260" filter="url(#ft)"/><rect x="-100" y="100" width="700" height="260" filter="url(#ft2)"/></g></g>
<path d="M0 164 L80 160 L80 186 L0 191 Z" fill="#b9babc"/>
<path d="M0 175 L80 171 L80 178 L0 183 Z" fill="#8f9093"/>
<path d="M393 151.5 L477 157 L477 175.5 L393 169.3 Z" fill="#b7b8ba"/>
<path d="M393 158.6 L477 163.5 L477 170 L393 165.7 Z" fill="#8e8f92"/>
<!-- back-left leg -->
<path d="M251 156 L274.4 156 Q278 176 292 186 L296 189 L266.4 187 Q262 172 251 156 Z" fill="#8c8c8d"/>
<path d="M274.4 156 Q278 176 292 186 L296 189 L290 189 Q276 178 271 156 Z" fill="#a8a8a8"/>
<!-- right-front leg panel -->
<path d="M313.5 149.8 L381 133.8 L386.4 135.5 L409.5 205.7 L413 210.2 L375.7 206.6 L372.1 199.5 Q366 176 359.7 167.5 Q352 157 313.5 149.8 Z" fill="#8d8d8e"/>
<path d="M381 133.8 L386.4 135.5 L409.5 205.7 L413 210.2 L406 210 L384 138 Z" fill="#a6a6a6"/>
<!-- table top -->
<path d="M80 140 Q84 132 95 131 L230 124 L381 131 Q386 133 386.4 135.5 L377.5 136 L256.7 147 L150 150 L80 146 Z" fill="url(#top)"/>
<path d="M256.7 145.3 L377.5 134.6 L383 136 L313.5 149.8 L258 150.5 Z" fill="#858585"/>
<!-- front-left panel -->
<path d="M77.7 144.7 Q82 133 101 131 L246 140 Q256 142 256 146 L242.8 164 L213.7 220.4 L192.3 264 L140 264 L155.4 226.3 Q161 210 161 197 Q160 184 155.4 181.6 L136 175.8 L104.9 170.9 Q96 171 91.3 175.8 L77.7 187.4 L64.1 206.8 L48.6 236 L38.9 253.5 L33 264 L0 264 L0 253.5 Q14 246 23.3 232 L38.9 201 L58.3 164 Z" fill="url(#panel)"/>
<path d="M104.9 170.9 Q96 171 91.3 175.8 L77.7 187.4 L64.1 206.8 L48.6 236 L38.9 253.5 L33 264 L44 264 L52 246 L66 216 L80 193 Q92 180 104.9 176 Z" fill="#8f8f90"/>
<path d="M0 253.5 Q14 246 23.3 232 L30 232 Q22 250 10 264 L0 264 Z" fill="#b4b4b4" opacity="0.6"/>
</svg>
<div class="a" style="left:521px;top:99px;width:571px;height:799px;background:#fafafa"></div>
<svg class="a" style="left:522px;top:100px;overflow:hidden" width="569" height="797"><rect width="569" height="797" fill="#303030"/><g stroke="#a0a0a0" stroke-width="1" opacity="0.7"><line x1="284.50" y1="77.81" x2="964.78" y2="398.50"/><line x1="284.50" y1="77.81" x2="-395.78" y2="398.50"/><line x1="237.58" y1="99.93" x2="928.98" y2="449.13"/><line x1="331.42" y1="99.93" x2="-359.98" y2="449.14"/><line x1="187.32" y1="123.62" x2="889.20" y2="505.40"/><line x1="381.68" y1="123.62" x2="-320.20" y2="505.40"/><line x1="133.33" y1="149.08" x2="844.73" y2="568.28"/><line x1="435.67" y1="149.08" x2="-275.73" y2="568.28"/><line x1="75.18" y1="176.49" x2="794.71" y2="639.02"/><line x1="493.82" y1="176.49" x2="-225.71" y2="639.02"/><line x1="12.39" y1="206.09" x2="738.02" y2="719.19"/><line x1="556.61" y1="206.09" x2="-169.02" y2="719.19"/><line x1="-55.64" y1="238.16" x2="673.23" y2="810.81"/><line x1="624.64" y1="238.16" x2="-104.23" y2="810.81"/><line x1="-129.58" y1="273.01" x2="598.48" y2="916.53"/><line x1="698.58" y1="273.01" x2="-29.48" y2="916.53"/><line x1="-210.25" y1="311.04" x2="511.26" y2="1039.88"/><line x1="779.25" y1="311.04" x2="57.74" y2="1039.88"/><line x1="-298.60" y1="352.69" x2="408.19" y2="1185.64"/><line x1="867.60" y1="352.69" x2="160.81" y2="1185.64"/><line x1="-395.78" y1="398.50" x2="284.50" y2="1360.56"/><line x1="964.78" y1="398.50" x2="284.50" y2="1360.56"/></g><rect x="0.5" y="0.5" width="568" height="796" fill="none" stroke="#222" stroke-width="1"/></svg>
<svg class="a" style="left:503px;top:494px;" width="5" height="9" viewBox="0 0 5 9"><path d="M4.5 0.5 V8.5 L0.3 4.5 Z" fill="#5a5a5a"/></svg>
<svg class="a" style="left:1106px;top:494px;" width="5" height="9" viewBox="0 0 5 9"><path d="M0.5 0.5 V8.5 L4.7 4.5 Z" fill="#5a5a5a"/></svg>
<div class="a" style="left:1122px;top:91px;width:268px;height:22px;background:#c8c8c8"></div>
<svg class="a" style="left:1126px;top:99px;" width="18" height="9" viewBox="0 0 18 9"><path d="M0 0 L5.5 4 L0 8 Z" fill="#3e3e3e"/><rect x="5" y="0.3" width="13" height="7.6" rx="3" fill="#3e3e3e"/></svg>
<div class="a" style="left:1148px;top:92.65px;font-size:14px;line-height:20px;letter-spacing:0.3px;">Views</div>
<svg class="a" style="left:1373px;top:92px;" width="18" height="18" viewBox="0 0 18 18"><rect x="0.5" y="0.5" width="17" height="17" rx="2.5" fill="#fdfdfd" stroke="#8e8e8e"/><circle cx="9" cy="8.5" r="5" fill="#c8102e"/><path d="M7 6.5 L11 10.5 M11 6.5 L7 10.5" stroke="#fff" stroke-width="1.2"/></svg>
<div class="a" style="left:1124px;top:122.85px;font-size:14px;line-height:20px;letter-spacing:0.45px;">Type:</div>
<div class="a" style="left:1167px;top:119px;width:138px;height:25px;background:linear-gradient(#fdfdfd,#f0f0f0);border:1px solid #ababab;border-radius:3px"></div>
<div class="a" style="left:1172px;top:121.55px;width:111px;overflow:hidden;font-size:14px;line-height:20px;letter-spacing:0.4px">Orbit (rviz_default_plugins)</div>
<svg class="a" style="left:1290px;top:129px;" width="8" height="5" viewBox="0 0 8 5"><path d="M0.3 0.3 H7.5 L3.9 4.3 Z" fill="#666"/></svg>
<div class="a" style="left:1311px;top:119px;width:84px;height:25px;background:linear-gradient(#fdfdfd,#efefef);border:1px solid #ababab;border-radius:3px"></div>
<div class="a" style="left:1311px;top:121.55px;width:84px;text-align:center;font-size:14px;line-height:20px;letter-spacing:0.4px;">Zero</div>
<div class="a" style="left:1122px;top:152px;width:268px;height:721px;background:#fff;border:1px solid #b0b0b0;border-right:none"></div>
<div class="a" style="left:1143px;top:153px;width:247px;height:17px;background:#b9ada3"></div>
<div class="a" style="left:1257px;top:153px;width:1px;height:719px;background:#dedede"></div>
<svg class="a" style="left:1129px;top:159px;" width="9" height="5" viewBox="0 0 9 5"><path d="M0.3 0.3 H8.3 L4.3 4.5 Z" fill="#606060"/></svg>
<div class="a" style="left:1146px;top:152.15px;font-size:14px;line-height:20px;font-weight:700;letter-spacing:0.4px;">Current View</div>
<div class="a" style="left:1261px;top:152.15px;font-size:14px;line-height:20px;font-weight:700;letter-spacing:0.4px;">Orbit (rviz)</div>
<div class="a" style="left:1166px;top:169.15px;font-size:14px;line-height:20px;letter-spacing:0.45px;width:90px;overflow:hidden;">Near Clip …</div>
<div class="a" style="left:1261px;top:169.15px;font-size:14px;line-height:20px;letter-spacing:0.45px;">0.01</div>
<div class="a" style="left:1166px;top:186.15px;font-size:14px;line-height:20px;letter-spacing:0.45px;width:90px;overflow:hidden;">Invert Z Axis</div>
<div class="a" style="left:1166px;top:203.15px;font-size:14px;line-height:20px;letter-spacing:0.45px;width:90px;overflow:hidden;">Target Fra…</div>
<div class="a" style="left:1261px;top:203.15px;font-size:14px;line-height:20px;letter-spacing:0.45px;">&lt;Fixed Frame&gt;</div>
<div class="a" style="left:1166px;top:220.15px;font-size:14px;line-height:20px;letter-spacing:0.45px;width:90px;overflow:hidden;">Distance</div>
<div class="a" style="left:1261px;top:220.15px;font-size:14px;line-height:20px;letter-spacing:0.45px;">10</div>
<div class="a" style="left:1166px;top:237.15px;font-size:14px;line-height:20px;letter-spacing:0.45px;width:90px;overflow:hidden;">Focal Shap…</div>
<div class="a" style="left:1261px;top:237.15px;font-size:14px;line-height:20px;letter-spacing:0.45px;">0.05</div>
<div class="a" style="left:1166px;top:254.15px;font-size:14px;line-height:20px;letter-spacing:0.45px;width:90px;overflow:hidden;">Focal Shap…</div>
<div class="a" style="left:1166px;top:271.15px;font-size:14px;line-height:20px;letter-spacing:0.45px;width:90px;overflow:hidden;">Yaw</div>
<div class="a" style="left:1261px;top:271.15px;font-size:14px;line-height:20px;letter-spacing:0.45px;">0.785398</div>
<div class="a" style="left:1166px;top:288.15px;font-size:14px;line-height:20px;letter-spacing:0.45px;width:90px;overflow:hidden;">Pitch</div>
<div class="a" style="left:1261px;top:288.15px;font-size:14px;line-height:20px;letter-spacing:0.45px;">0.785398</div>
<div class="a" style="left:1166px;top:305.15px;font-size:14px;line-height:20px;letter-spacing:0.45px;width:90px;overflow:hidden;">Focal Point</div>
<div class="a" style="left:1261px;top:305.15px;font-size:14px;line-height:20px;letter-spacing:0.45px;">0; 0; 0</div>
<svg class="a" style="left:1260px;top:188px;" width="14" height="14" viewBox="0 0 14 14"><rect x="0.7" y="0.7" width="12.6" height="12.6" rx="1" fill="#fff" stroke="#bdbdbd" stroke-width="1.3"/></svg>
<svg class="a" style="left:1260px;top:256px;" width="14" height="14" viewBox="0 0 14 14"><rect x="0.7" y="0.7" width="12.6" height="12.6" rx="1" fill="#fff" stroke="#bdbdbd" stroke-width="1.3"/><path d="M3.2 6.2 L5.6 10.8 L9.6 2.6" fill="none" stroke="#111" stroke-width="1.6"/></svg>
<svg class="a" style="left:1151px;top:311px;" width="5" height="9" viewBox="0 0 5 9"><path d="M0.3 0.3 V8.3 L4.5 4.3 Z" fill="#606060"/></svg>
<div class="a" style="left:1124px;top:879px;width:85px;height:25px;background:linear-gradient(#fdfdfd,#efefef);border:1px solid #ababab;border-radius:3px"></div>
<div class="a" style="left:1124px;top:882.35px;width:85px;text-align:center;font-size:14px;line-height:20px;letter-spacing:0.4px;">Save</div>
<div class="a" style="left:1215px;top:879px;width:85px;height:25px;background:linear-gradient(#fdfdfd,#efefef);border:1px solid #ababab;border-radius:3px"></div>
<div class="a" style="left:1215px;top:882.35px;width:85px;text-align:center;font-size:14px;line-height:20px;letter-spacing:0.4px;">Remove</div>
<div class="a" style="left:1306px;top:879px;width:85px;height:25px;background:linear-gradient(#fdfdfd,#efefef);border:1px solid #ababab;border-radius:3px"></div>
<div class="a" style="left:1306px;top:882.35px;width:85px;text-align:center;font-size:14px;line-height:20px;letter-spacing:0.4px;">Rename</div>
<div class="a" style="left:0px;top:909px;width:50px;height:26px;background:linear-gradient(#fdfdfd,#efefef);border:1px solid #ababab;border-radius:3px"></div>
<div class="a" style="left:0px;top:911.15px;width:50px;text-align:center;font-size:14px;line-height:20px;letter-spacing:0.4px;">Reset</div>
<div class="a" style="left:57px;top:910.55px;font-size:14px;line-height:20px;letter-spacing:0.55px;"><b>Left-Click:</b> Rotate. <b>Middle-Click:</b> Move X/Y. <b>Right-Click/Mouse Wheel:</b>: Zoom. <b>Shift</b>: More options.</div>
<div class="a" style="left:1327px;top:908.25px;font-size:14px;line-height:20px;letter-spacing:0.4px;">31 fps</div>
<svg class="a" style="left:1383px;top:925px;" width="6" height="6" viewBox="0 0 6 6"><rect x="4" y="0.8" width="1.2" height="1.2" fill="#a0a0a0"/><rect x="1" y="3.8" width="1.2" height="1.2" fill="#a0a0a0"/><rect x="4" y="3.8" width="1.2" height="1.2" fill="#a0a0a0"/></svg>
</body></html>
